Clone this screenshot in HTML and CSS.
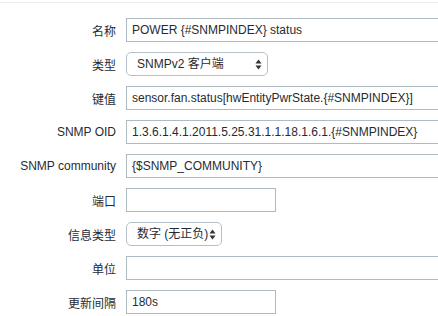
FILE: index.html
```html
<!DOCTYPE html>
<html lang="zh">
<head>
    <meta charset="utf-8">
    <title>监控项</title>
    <link rel="stylesheet" href="styles.css">
</head>
<body>

<div class="form-box">
    <ul class="form-list">
        <li class="form-row">
            <label class="form-label">名称</label>
            <div class="form-field"><input type="text" class="text-input wide" value="POWER {#SNMPINDEX} status"></div>
        </li>
        <li class="form-row">
            <label class="form-label">类型</label>
            <div class="form-field">
                <span class="select-wrap type-select">
                    <select class="select-input"><option>SNMPv2 客户端</option></select>
                    <svg class="select-arrows" width="7" height="11" viewBox="0 0 7 11"><path d="M3.5 0.5 L6.5 4.5 L0.5 4.5 Z M0.5 6.5 L6.5 6.5 L3.5 10.5 Z" fill="#333"/></svg>
                </span>
            </div>
        </li>
        <li class="form-row">
            <label class="form-label">键值</label>
            <div class="form-field"><input type="text" class="text-input wide" value="sensor.fan.status[hwEntityPwrState.{#SNMPINDEX}]"></div>
        </li>
        <li class="form-row">
            <label class="form-label">SNMP OID</label>
            <div class="form-field"><input type="text" class="text-input wide" value="1.3.6.1.4.1.2011.5.25.31.1.1.18.1.6.1.{#SNMPINDEX}"></div>
        </li>
        <li class="form-row">
            <label class="form-label">SNMP community</label>
            <div class="form-field"><input type="text" class="text-input wide" value="{$SNMP_COMMUNITY}"></div>
        </li>
        <li class="form-row">
            <label class="form-label">端口</label>
            <div class="form-field"><input type="text" class="text-input short" value=""></div>
        </li>
        <li class="form-row">
            <label class="form-label">信息类型</label>
            <div class="form-field">
                <span class="select-wrap value-select">
                    <select class="select-input"><option>数字 (无正负)</option></select>
                    <svg class="select-arrows" width="7" height="11" viewBox="0 0 7 11"><path d="M3.5 0.5 L6.5 4.5 L0.5 4.5 Z M0.5 6.5 L6.5 6.5 L3.5 10.5 Z" fill="#333"/></svg>
                </span>
            </div>
        </li>
        <li class="form-row">
            <label class="form-label">单位</label>
            <div class="form-field"><input type="text" class="text-input wide" value=""></div>
        </li>
        <li class="form-row">
            <label class="form-label">更新间隔</label>
            <div class="form-field"><input type="text" class="text-input short" value="180s"></div>
        </li>
    </ul>
</div>

</body>
</html>
```

FILE: styles.css
```css
body {
    margin: 0;
    background-color: #fff;
    color: #1f2c33;
    font-family: "Liberation Sans", Arial, "Noto Sans CJK SC", sans-serif;
    font-size: 12px;
}

.form-box {
    margin-top: 2px;
    border-top: 1px solid #ebeef0;
    padding-top: 15px;
    overflow: hidden;
}

.form-list {
    list-style: none;
    margin: 0;
    padding: 0;
    display: flex;
    flex-direction: column;
    gap: 10px;
}

.form-row {
    display: grid;
    grid-template-columns: 116px minmax(0, 1fr);
    column-gap: 10px;
    align-items: center;
    height: 24px;
}

.form-label {
    text-align: right;
    white-space: nowrap;
}

.form-field {
    display: flex;
    min-width: 0;
    overflow: hidden;
}

.text-input {
    box-sizing: border-box;
    height: 24px;
    margin: 0;
    padding: 0 5px;
    border: 1px solid #aebcc2;
    border-radius: 0;
    background: #fff;
    color: #1f2c33;
    font: inherit;
    outline: none;
}

.text-input.wide {
    width: 340px;
    flex: none;
}

.text-input.short {
    width: 150px;
}

/* native-looking select with stacked arrows */
.select-wrap {
    position: relative;
    display: inline-block;
}

.select-input {
    -webkit-appearance: none;
    appearance: none;
    box-sizing: border-box;
    height: 24px;
    margin: 0;
    padding: 0 0 0 10px;
    border: 1px solid #b4c0c6;
    border-radius: 5px;
    background: #fff;
    color: #1f2c33;
    font: inherit;
    outline: none;
}

.type-select .select-input {
    width: 142px;
}

.value-select .select-input {
    width: 96px;
}

.select-arrows {
    position: absolute;
    right: 6px;
    top: 7px;
    pointer-events: none;
}
```
